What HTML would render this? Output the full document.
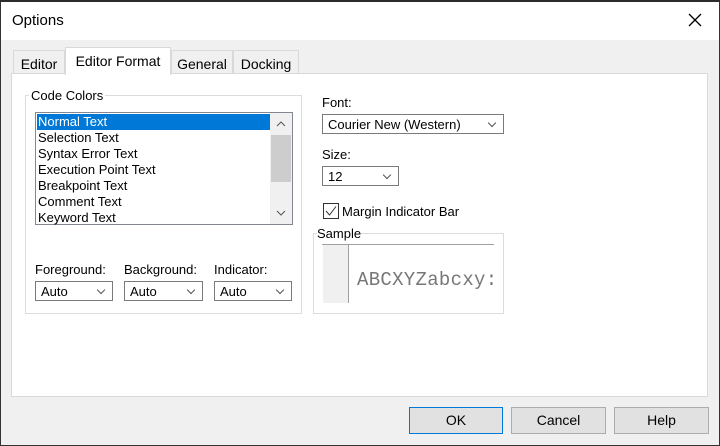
<!DOCTYPE html>
<html><head><style>
*{margin:0;padding:0;box-sizing:border-box}
body{width:720px;height:446px;background:#f0f0f0;font-family:"Liberation Sans",sans-serif;font-size:13px;color:#000;position:relative;overflow:hidden}
.a{position:absolute}
.win{left:0;top:0;width:720px;height:446px;border:1px solid #333;border-top:2px solid #2b2b2b}
.title{left:1px;top:2px;width:718px;height:38px;background:#fff}
.tab{top:50px;height:24px;background:#f0f0f0;border:1px solid #d9d9d9;border-bottom:none;padding:5px 0 0 0;text-align:center;font-size:14px}
.panel{left:11px;top:73px;width:697px;height:324px;background:#fff;border:1px solid #d9d9d9}
.grp{border:1px solid #dcdcdc}
.lbl{background:#fff;padding:0 2px;font-size:13px}
.cb{background:#fff;border:1px solid #7a7a7a;height:20px;font-size:13px;padding:2px 0 0 5px}
.cb:after{content:"";position:absolute;right:8px;top:5px;width:5px;height:5px;border-right:1px solid #555;border-bottom:1px solid #555;transform:rotate(45deg)}
.item{left:1px;width:233px;height:16px;padding-left:1px;font-size:13px;line-height:16px}
.btn{top:407px;height:27px;background:#e1e1e1;border:1px solid #adadad;text-align:center;line-height:25px;font-size:14px}
</style></head><body>
<div class="a win"></div>
<div class="a title"></div>
<div class="a" style="left:12px;top:12px;font-size:15px">Options</div>
<svg class="a" style="left:688px;top:13px" width="14" height="14"><path d="M1 1L13 13M13 1L1 13" stroke="#000" stroke-width="1.3"/></svg>
<div class="a tab" style="left:13px;width:52px">Editor</div>
<div class="a tab" style="left:171px;width:62px">General</div>
<div class="a tab" style="left:233px;width:66px">Docking</div>
<div class="a panel"></div>
<div class="a tab" style="left:65px;top:47px;width:106px;height:28px;background:#fff;padding-top:5px">Editor Format</div>

<div class="a grp" style="left:25px;top:95px;width:277px;height:219px"></div>
<div class="a lbl" style="left:29px;top:88px">Code Colors</div>
<div class="a" style="left:35px;top:112px;width:258px;height:113px;border:1px solid #828790;background:#fff">
<div class="a item" style="top:1px;background:#0078d7;color:#fff">Normal Text</div>
<div class="a item" style="top:17px">Selection Text</div>
<div class="a item" style="top:33px">Syntax Error Text</div>
<div class="a item" style="top:49px">Execution Point Text</div>
<div class="a item" style="top:65px">Breakpoint Text</div>
<div class="a item" style="top:81px">Comment Text</div>
<div class="a item" style="top:97px">Keyword Text</div>
<div class="a" style="left:234px;top:0;width:22px;height:111px;background:#f0f0f0"></div>
<div class="a" style="left:235px;top:22px;width:20px;height:47px;background:#cdcdcd"></div>
<svg class="a" style="left:239px;top:7px" width="12" height="8"><path d="M2 6L6 2L10 6" stroke="#555" fill="none"/></svg>
<svg class="a" style="left:239px;top:96px" width="12" height="8"><path d="M2 2L6 6L10 2" stroke="#555" fill="none"/></svg>
</div>
<div class="a" style="left:35px;top:262px">Foreground:</div>
<div class="a" style="left:124px;top:262px">Background:</div>
<div class="a" style="left:214px;top:262px">Indicator:</div>
<div class="a cb" style="left:35px;top:281px;width:78px">Auto</div>
<div class="a cb" style="left:124px;top:281px;width:79px">Auto</div>
<div class="a cb" style="left:214px;top:281px;width:78px">Auto</div>

<div class="a" style="left:322px;top:95px">Font:</div>
<div class="a cb" style="left:322px;top:114px;width:182px">Courier New (Western)</div>
<div class="a" style="left:322px;top:147px">Size:</div>
<div class="a cb" style="left:322px;top:166px;width:77px">12</div>
<div class="a" style="left:323px;top:203px;width:16px;height:16px;border:1px solid #333;background:#fff"></div>
<svg class="a" style="left:324px;top:204px" width="14" height="14"><path d="M2 7L5.5 11L12 2.5" stroke="#333" fill="none"/></svg>
<div class="a" style="left:342px;top:204px">Margin Indicator Bar</div>
<div class="a grp" style="left:313px;top:233px;width:191px;height:81px"></div>
<div class="a lbl" style="left:317px;top:226px;padding:0">Sample</div>
<div class="a" style="left:322px;top:244px;width:172px;height:1px;background:#a0a0a0"></div>
<div class="a" style="left:323px;top:245px;width:26px;height:58px;background:#f0f0f0;border-right:1px solid #a0a0a0"></div>
<div class="a" style="left:322px;top:245px;width:172px;height:58px;overflow:hidden">
<div class="a" style="left:35px;top:24px;font-family:'Liberation Mono',monospace;font-size:19px;color:#777;white-space:nowrap;letter-spacing:0.3px">ABCXYZabcxy:</div>
</div>

<div class="a btn" style="left:409px;width:94px;border:1px solid #0078d7">OK</div>
<div class="a btn" style="left:511px;width:95px">Cancel</div>
<div class="a btn" style="left:614px;width:95px">Help</div>
</body></html>
